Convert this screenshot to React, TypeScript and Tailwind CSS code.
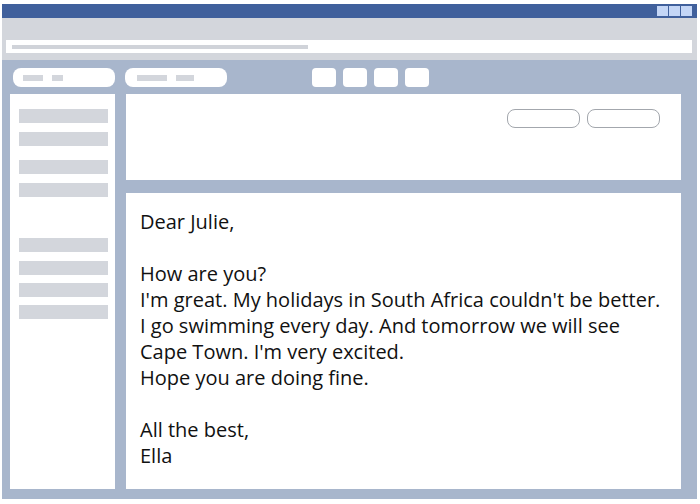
const sideBars = ["mt-[15px]", "mt-[9px]", "mt-[14px]", "mt-[9px]", "mt-[41px]", "mt-[9px]", "mt-[8px]", "mt-[8px]"];

const letter = [
  "Dear Julie,",
  "",
  "How are you?",
  "I'm great. My holidays in South Africa couldn't be better.",
  "I go swimming every day. And tomorrow we will see",
  "Cape Town. I'm very excited.",
  "Hope you are doing fine.",
  "",
  "All the best,",
  "Ella",
];

export default function App() {
  return (
    <div className="w-[700px] h-[504px] bg-white pt-[4px] pl-[2px] pr-[3px] overflow-hidden">
      <div className="flex flex-col w-[695px]">
        {/* title bar */}
        <div className="h-[14px] bg-[#40609c] flex justify-end items-center pr-[5px] gap-[1px]">
          <div className="w-[11px] h-[10px] bg-[#c4d6f6]" />
          <div className="w-[11px] h-[10px] bg-[#c4d6f6]" />
          <div className="w-[11px] h-[10px] bg-[#c4d6f6]" />
        </div>
        {/* address area */}
        <div className="h-[42px] bg-[#d3d6dc] pt-[22px] pl-[4px] pr-[5px]">
          <div className="h-[13px] bg-white flex items-center pl-[6px]">
            <div className="w-[296px] h-[4px] bg-[#d0d3d9]" />
          </div>
        </div>
        {/* body */}
        <div className="h-[439px] bg-[#a8b6cc] flex flex-col">
          <div className="flex items-center pt-[8px] pl-[11px] h-[27px]">
            <div className="w-[102px] h-[19px] bg-white rounded-[8px] flex items-center pl-[10px] gap-[9px]">
              <div className="w-[20px] h-[6px] bg-[#d3d6dc]" />
              <div className="w-[11px] h-[6px] bg-[#d3d6dc]" />
            </div>
            <div className="ml-[10px] w-[102px] h-[19px] bg-white rounded-[8px] flex items-center pl-[12px] gap-[9px]">
              <div className="w-[30px] h-[6px] bg-[#d3d6dc]" />
              <div className="w-[18px] h-[6px] bg-[#d3d6dc]" />
            </div>
            <div className="ml-[85px] flex gap-[7px]">
              <div className="w-[24px] h-[19px] bg-white rounded-[4px]" />
              <div className="w-[24px] h-[19px] bg-white rounded-[4px]" />
              <div className="w-[24px] h-[19px] bg-white rounded-[4px]" />
              <div className="w-[24px] h-[19px] bg-white rounded-[4px]" />
            </div>
          </div>
          <div className="flex mt-[7px] pl-[8px] gap-[11px] h-[395px]">
            <div className="w-[105px] bg-white pl-[9px] flex flex-col">
              {sideBars.map((m, i) => (
                <div key={i} className={`w-[89px] h-[14px] bg-[#d3d6dc] ${m}`} />
              ))}
            </div>
            <div className="w-[555px] flex flex-col">
              <div className="h-[86px] bg-white flex justify-end items-start pt-[15px] pr-[21px] gap-[7px]">
                <div className="w-[73px] h-[19px] rounded-[8px] border border-[#a3a7ad]" />
                <div className="w-[73px] h-[19px] rounded-[8px] border border-[#a3a7ad]" />
              </div>
              <div className="mt-[13px] h-[296px] bg-white pt-[16px] pl-[14px] text-[20px] leading-[26px] text-[#111] font-['Open_Sans',sans-serif]">
                {letter.map((l, i) => (
                  <div key={i} className="h-[26px] whitespace-nowrap">
                    {l}
                  </div>
                ))}
              </div>
            </div>
          </div>
        </div>
      </div>
    </div>
  );
}
